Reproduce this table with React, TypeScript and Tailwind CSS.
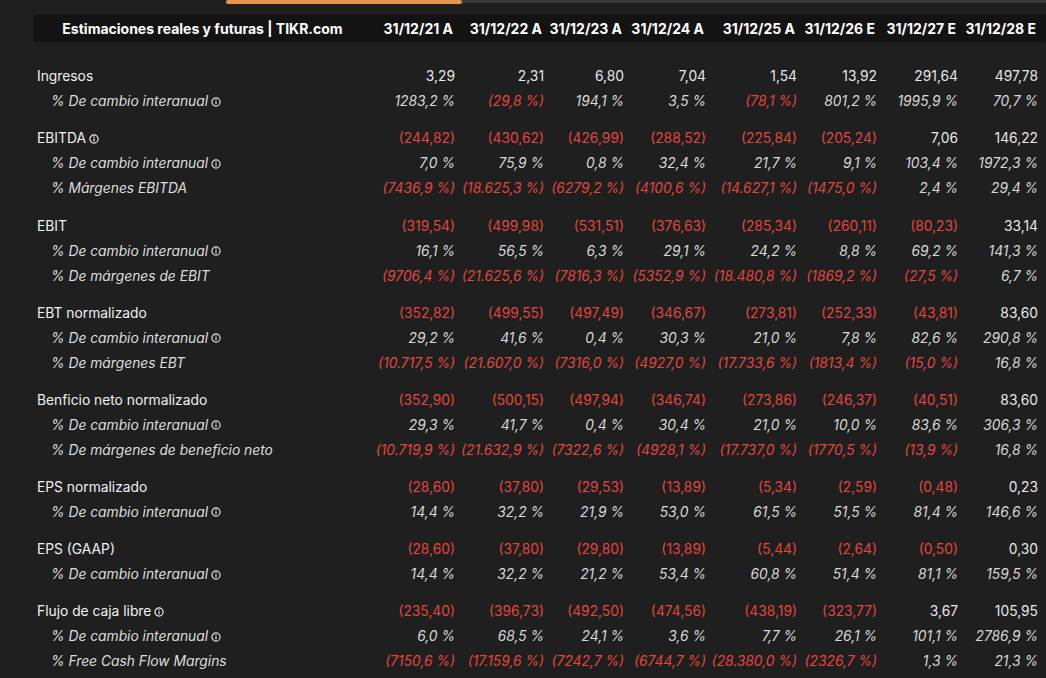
import React from "react";

type Row = { label: string; sub?: boolean; info?: boolean; values: string[] };
type Group = Row[];

const DATES = ["31/12/21 A", "31/12/22 A", "31/12/23 A", "31/12/24 A", "31/12/25 A", "31/12/26 E", "31/12/27 E", "31/12/28 E"];

const v = (s: string) => s.split("|").map((x) => x.trim());

const groups: Group[] = [
  [
    { label: "Ingresos", values: v("3,29|2,31|6,80|7,04|1,54|13,92|291,64|497,78") },
    { label: "% De cambio interanual", sub: true, info: true, values: v("1283,2 %|(29,8 %)|194,1 %|3,5 %|(78,1 %)|801,2 %|1995,9 %|70,7 %") },
  ],
  [
    { label: "EBITDA", info: true, values: v("(244,82)|(430,62)|(426,99)|(288,52)|(225,84)|(205,24)|7,06|146,22") },
    { label: "% De cambio interanual", sub: true, info: true, values: v("7,0 %|75,9 %|0,8 %|32,4 %|21,7 %|9,1 %|103,4 %|1972,3 %") },
    { label: "% Márgenes EBITDA", sub: true, values: v("(7436,9 %)|(18.625,3 %)|(6279,2 %)|(4100,6 %)|(14.627,1 %)|(1475,0 %)|2,4 %|29,4 %") },
  ],
  [
    { label: "EBIT", values: v("(319,54)|(499,98)|(531,51)|(376,63)|(285,34)|(260,11)|(80,23)|33,14") },
    { label: "% De cambio interanual", sub: true, info: true, values: v("16,1 %|56,5 %|6,3 %|29,1 %|24,2 %|8,8 %|69,2 %|141,3 %") },
    { label: "% De márgenes de EBIT", sub: true, values: v("(9706,4 %)|(21.625,6 %)|(7816,3 %)|(5352,9 %)|(18.480,8 %)|(1869,2 %)|(27,5 %)|6,7 %") },
  ],
  [
    { label: "EBT normalizado", values: v("(352,82)|(499,55)|(497,49)|(346,67)|(273,81)|(252,33)|(43,81)|83,60") },
    { label: "% De cambio interanual", sub: true, info: true, values: v("29,2 %|41,6 %|0,4 %|30,3 %|21,0 %|7,8 %|82,6 %|290,8 %") },
    { label: "% De márgenes EBT", sub: true, values: v("(10.717,5 %)|(21.607,0 %)|(7316,0 %)|(4927,0 %)|(17.733,6 %)|(1813,4 %)|(15,0 %)|16,8 %") },
  ],
  [
    { label: "Benficio neto normalizado", values: v("(352,90)|(500,15)|(497,94)|(346,74)|(273,86)|(246,37)|(40,51)|83,60") },
    { label: "% De cambio interanual", sub: true, info: true, values: v("29,3 %|41,7 %|0,4 %|30,4 %|21,0 %|10,0 %|83,6 %|306,3 %") },
    { label: "% De márgenes de beneficio neto", sub: true, values: v("(10.719,9 %)|(21.632,9 %)|(7322,6 %)|(4928,1 %)|(17.737,0 %)|(1770,5 %)|(13,9 %)|16,8 %") },
  ],
  [
    { label: "EPS normalizado", values: v("(28,60)|(37,80)|(29,53)|(13,89)|(5,34)|(2,59)|(0,48)|0,23") },
    { label: "% De cambio interanual", sub: true, info: true, values: v("14,4 %|32,2 %|21,9 %|53,0 %|61,5 %|51,5 %|81,4 %|146,6 %") },
  ],
  [
    { label: "EPS (GAAP)", values: v("(28,60)|(37,80)|(29,80)|(13,89)|(5,44)|(2,64)|(0,50)|0,30") },
    { label: "% De cambio interanual", sub: true, info: true, values: v("14,4 %|32,2 %|21,2 %|53,4 %|60,8 %|51,4 %|81,1 %|159,5 %") },
  ],
  [
    { label: "Flujo de caja libre", info: true, values: v("(235,40)|(396,73)|(492,50)|(474,56)|(438,19)|(323,77)|3,67|105,95") },
    { label: "% De cambio interanual", sub: true, info: true, values: v("6,0 %|68,5 %|24,1 %|3,6 %|7,7 %|26,1 %|101,1 %|2786,9 %") },
    { label: "% Free Cash Flow Margins", sub: true, values: v("(7150,6 %)|(17.159,6 %)|(7242,7 %)|(6744,7 %)|(28.380,0 %)|(2326,7 %)|1,3 %|21,3 %") },
  ],
];

const COLS = "grid grid-cols-[341px_80px_89px_80px_82px_91px_80px_81px_80px]";

function InfoIcon() {
  return (
    <svg width="10" height="10" viewBox="0 0 10 10" className="ml-[3px] inline-block shrink-0">
      <circle cx="5" cy="5" r="4.1" fill="none" stroke="currentColor" strokeWidth="1.2" />
      <line x1="5" y1="4.4" x2="5" y2="7.3" stroke="currentColor" strokeWidth="1.3" />
      <circle cx="5" cy="2.9" r="0.75" fill="currentColor" />
    </svg>
  );
}

export default function App() {
  return (
    <div className="h-[678px] w-full overflow-hidden bg-[#1f1f1f] text-[13.8px] font-['Inter','Noto_Sans',sans-serif] text-[#ececec]">
      <div className="flex h-[4px]">
        <div className="w-[226px]" />
        <div className="flex-1 h-[3px] bg-[#3a3a3a]">
          <div className="h-[4px] w-[236px] rounded-full bg-[#e9944b]" />
        </div>
      </div>

      <div className={`${COLS} mt-[11px] ml-[34px] h-[26px] items-center bg-[#131313] font-bold text-[14px] text-white shadow-[0_1px_3px_rgba(0,0,0,0.4)]`}>
        <div className="text-center pr-[4px] whitespace-nowrap">Estimaciones reales y futuras | TIKR.com</div>
        {DATES.map((d) => (
          <div key={d} className="text-right pr-[2px] whitespace-nowrap">{d}</div>
        ))}
      </div>

      <div className="ml-[34px] mt-[23px] flex flex-col gap-[12.2px]">
        {groups.map((g, gi) => (
          <div key={gi}>
            {g.map((r, ri) => (
              <div key={ri} className={`${COLS} h-[25px] items-center`}>
                <div className={`flex items-center ${r.sub ? "pl-[17px] italic text-[#dedede]" : "pl-[3px] text-[#f0f0f0]"}`}>
                  <span>{r.label}</span>
                  {r.info && <InfoIcon />}
                </div>
                {r.values.map((val, vi) => (
                  <div
                    key={vi}
                    className={`text-right whitespace-nowrap ${r.sub ? "italic" : ""} ${val.startsWith("(") ? "text-[#e2463f]" : r.sub ? "text-[#d8d8d8]" : "text-[#e8e8e8]"}`}
                  >
                    {val}
                  </div>
                ))}
              </div>
            ))}
          </div>
        ))}
      </div>
    </div>
  );
}
